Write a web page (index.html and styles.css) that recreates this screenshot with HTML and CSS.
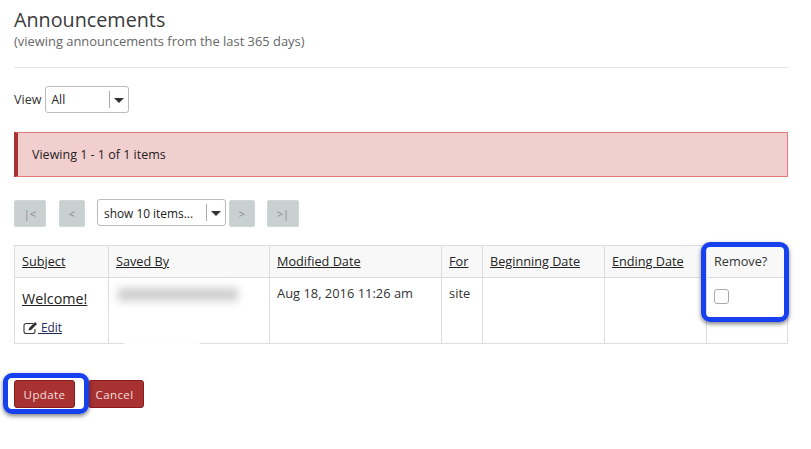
FILE: index.html
```html
<!DOCTYPE html>
<html lang="en">
<head>
    <meta charset="UTF-8">
    <title>Announcements</title>
    <link rel="stylesheet" href="styles.css">
</head>
<body>
    <header class="page-head">
        <h1>Announcements</h1>
        <p>(viewing announcements from the last 365 days)</p>
    </header>

    <div class="view-row">
        <label>View</label>
        <div class="select select-view"><span>All</span><i class="arrow"></i></div>
    </div>

    <div class="alert">Viewing 1 - 1 of 1 items</div>

    <div class="pager">
        <button class="page-btn wide">|&lt;</button>
        <button class="page-btn narrow first-gap">&lt;</button>
        <div class="select select-pager"><span>show 10 items...</span><i class="arrow"></i></div>
        <button class="page-btn narrow">&gt;</button>
        <button class="page-btn wide last-gap">&gt;|</button>
    </div>

    <div class="table-wrap">
        <table>
            <colgroup>
                <col class="c-subject"><col class="c-saved"><col class="c-date"><col class="c-for">
                <col class="c-begin"><col class="c-end"><col class="c-remove">
            </colgroup>
            <thead>
                <tr>
                    <th><a>Subject</a></th>
                    <th><a>Saved By</a></th>
                    <th><a>Modified Date</a></th>
                    <th><a>For</a></th>
                    <th><a>Beginning Date</a></th>
                    <th><a>Ending Date</a></th>
                    <th>Remove?</th>
                </tr>
            </thead>
            <tbody>
                <tr>
                    <td>
                        <a class="subject-link">Welcome!</a>
                        <a class="edit-link">
                            <svg width="15" height="13" viewBox="0 0 15 13" fill="none" stroke="#333">
                                <path d="M10 2.500H3a2 2 0 0 0-2 2v6a2 2 0 0 0 2 2h7a2 2 0 0 0 2-2V8" stroke-width="1.1"/>
                                <path d="M5.500 9.500l.6-2.600L12 1l2 2-5.900 5.900z" fill="#333" stroke="none"/>
                            </svg>
                            <span>&nbsp;Edit</span>
                        </a>
                    </td>
                    <td><div class="blurred"></div></td>
                    <td>Aug 18, 2016 11:26 am</td>
                    <td>site</td>
                    <td></td>
                    <td></td>
                    <td><span class="checkbox"></span></td>
                </tr>
            </tbody>
        </table>
        <div class="smudge"></div>
        <div class="callout callout-remove"></div>
    </div>

    <div class="actions">
        <button class="btn">Update</button>
        <button class="btn">Cancel</button>
        <div class="callout callout-update"></div>
    </div>
</body>
</html>
```

FILE: styles.css
```css
/* Reset default browser styling */
* {
    margin: 0;
    padding: 0;
    box-sizing: border-box;
}

body {
    font-family: 'Open Sans', sans-serif;
    font-size: 13px;
    color: #333;
    background-color: #fff;
    padding: 8px 23px 20px 14px;
}

/* Page heading */
.page-head {
    height: 60px;
    border-bottom: 1px solid #e6e6e6;
}

.page-head h1 {
    font-size: 19.750px;
    font-weight: 400;
    line-height: 24px;
    color: #3a3a3a;
}

.page-head p {
    font-size: 12.900px;
    line-height: 18px;
    color: #666;
}

/* View select */
.view-row {
    display: flex;
    align-items: center;
    gap: 3px;
    margin-top: 18px;
    font-size: 12.600px;
}

.select {
    display: flex;
    align-items: center;
    height: 27px;
    background-color: #fff;
    border: 1px solid #bbb;
    border-radius: 3px;
    color: #222;
}

.select span {
    flex: 1;
    padding-left: 6px;
    white-space: nowrap;
}

.select-view {
    width: 84px;
    font-size: 12px;
}

.select-pager {
    width: 129px;
    margin-left: 12px;
    font-size: 11.900px;
}

.arrow {
    position: relative;
    width: 19px;
    height: 17px;
    border-left: 1px solid #aaa;
}

.arrow::after {
    content: "";
    position: absolute;
    left: 4px;
    top: 7px;
    border-left: 5px solid transparent;
    border-right: 5px solid transparent;
    border-top: 5px solid #333;
}

/* Alert */
.alert {
    height: 45px;
    margin-top: 19px;
    padding-left: 14px;
    line-height: 43px;
    font-size: 12.500px;
    color: #222;
    background-color: #f2cfcf;
    border: 1px solid #e07a7a;
    border-left: 4px solid #a83232;
}

/* Pager */
.pager {
    display: flex;
    height: 28px;
    margin-top: 22px;
}

.page-btn {
    align-self: flex-end;
    height: 27px;
    border: 1px solid #cfd6d6;
    border-radius: 2px;
    background-color: #c8d0d0;
    color: #888;
    font-family: inherit;
    font-size: 11px;
}

.page-btn.wide {
    width: 32px;
}

.page-btn.narrow {
    width: 26px;
}

.first-gap {
    margin-left: 13px;
}

.select-pager + .page-btn {
    margin-left: 3px;
}

.last-gap {
    margin-left: 12px;
}

/* Table */
.table-wrap {
    position: relative;
    margin-top: 18px;
    width: 773px;
}

table {
    width: 773px;
    table-layout: fixed;
    border-collapse: collapse;
}

.c-subject { width: 94px; }
.c-saved { width: 161px; }
.c-date { width: 172px; }
.c-for { width: 41px; }
.c-begin { width: 122px; }
.c-end { width: 102px; }
.c-remove { width: 81px; }

th, td {
    border: 1px solid #ddd;
    padding: 0 7px;
    text-align: left;
    vertical-align: top;
    font-weight: 400;
}

th {
    height: 32px;
    line-height: 31px;
    font-size: 12.700px;
    background-color: #f8f8f8;
}

td {
    height: 66px;
    padding-top: 6px;
    line-height: 18px;
    font-size: 12.900px;
}

th a {
    text-decoration: underline;
    color: #222;
}

.subject-link {
    display: block;
    margin-top: 5px;
    font-size: 14.300px;
    line-height: 20px;
    text-decoration: underline;
    color: #222;
}

.edit-link {
    display: flex;
    align-items: center;
    margin-top: 10px;
    padding-left: 1px;
    font-size: 11.800px;
    line-height: 16px;
    color: #1a2a5a;
}

.edit-link span {
    text-decoration: underline;
}

.blurred {
    width: 120px;
    height: 13px;
    margin-top: 4px;
    margin-left: 2px;
    background-color: #cdcdcd;
    filter: blur(4px);
}

.checkbox {
    display: block;
    width: 15px;
    height: 15px;
    margin-top: 5px;
    border: 1px solid #aaa;
    border-radius: 3px;
}

/* White patch left over the table's bottom border */
.smudge {
    position: absolute;
    left: 110px;
    bottom: -1px;
    width: 76px;
    height: 5px;
    background-color: #fff;
    filter: blur(1px);
}

/* Buttons */
.actions {
    position: relative;
    display: flex;
    gap: 13px;
    margin-top: 36px;
}

.btn {
    height: 28px;
    background-color: #a83232;
    border: 1px solid #8a1c1c;
    border-radius: 3px;
    color: #f3dede;
    font-family: inherit;
    font-size: 11.500px;
    font-weight: 500;
    letter-spacing: 0.4px;
}

.btn:first-child {
    width: 61px;
}

.btn:nth-child(2) {
    width: 56px;
    padding-right: 3px;
}

/* Blue highlights */
.callout {
    position: absolute;
    border: 5px solid #1740ee;
    border-radius: 9px;
    box-shadow: 0 2px 4px rgba(0, 0, 0, 0.5);
}

.callout-remove {
    left: 687px;
    top: -3px;
    width: 88px;
    height: 80px;
}

.callout-update {
    left: -11px;
    top: -7px;
    width: 86px;
    height: 41px;
}
```
